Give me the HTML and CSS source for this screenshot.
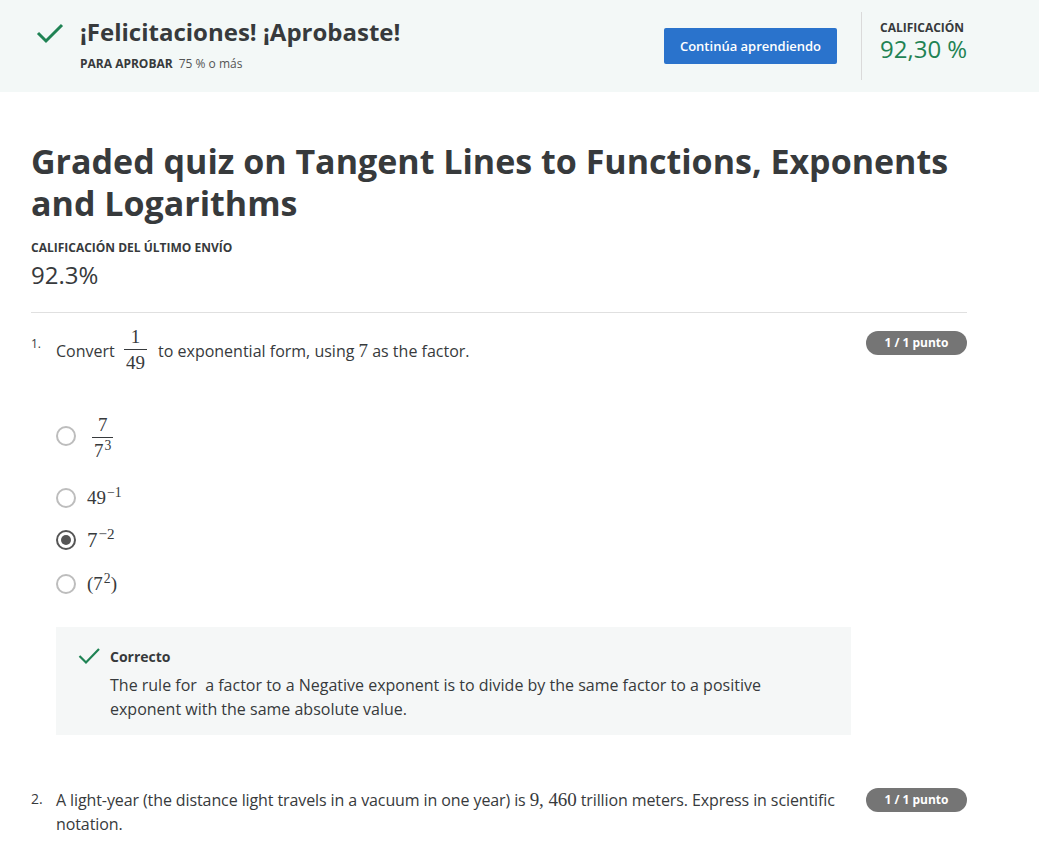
FILE: index.html
```html
<!DOCTYPE html>
<html lang="es">
<head>
<meta charset="utf-8">
<title>Graded quiz</title>
<link rel="stylesheet" href="styles.css">
</head>
<body>
<header class="banner">
  <div class="banner-left">
    <svg class="banner-check" width="28" height="22" viewBox="0 0 28 22"><path d="M2 11 L10 19 L26 3" fill="none" stroke="#1f8354" stroke-width="3"/></svg>
    <div class="banner-text">
      <h2 class="banner-title">¡Felicitaciones! ¡Aprobaste!</h2>
      <div class="banner-sub"><span class="sub-label">PARA APROBAR</span><span class="sub-val">75 % o más</span></div>
    </div>
  </div>
  <button class="btn">Continúa aprendiendo</button>
  <div class="grade">
    <div class="grade-label">CALIFICACIÓN</div>
    <div class="grade-val">92,30 %</div>
  </div>
</header>

<main class="content">
  <h1 class="quiz-title">Graded quiz on Tangent Lines to Functions, Exponents and Logarithms</h1>
  <div class="last-label">CALIFICACIÓN DEL ÚLTIMO ENVÍO</div>
  <div class="last-val">92.3%</div>
  <hr class="rule">

  <section class="q q1">
    <div class="qnum">1.</div>
    <div class="qbody">
      <div class="qtext">Convert <span class="frac big"><span class="num">1</span><span class="den">49</span></span> to exponential form, using <span class="m">7</span> as the factor.</div>
      <div class="options">
        <div class="opt opt-frac"><span class="radio"></span><span class="frac big"><span class="num">7</span><span class="den">7<sup>3</sup></span></span></div>
        <div class="opt"><span class="radio"></span><span class="m">49<sup>−1</sup></span></div>
        <div class="opt"><span class="radio checked"></span><span class="m big">7<sup>−2</sup></span></div>
        <div class="opt"><span class="radio"></span><span class="m">(7<sup>2</sup>)</span></div>
      </div>
      <div class="feedback">
        <svg class="fb-check" width="22" height="18" viewBox="0 0 22 18"><path d="M1.5 9 L8 15.5 L21 2" fill="none" stroke="#1f8354" stroke-width="2.2"/></svg>
        <div class="fb-body">
          <div class="fb-title">Correcto</div>
          <p class="fb-text">The rule for&nbsp; a factor to a Negative exponent is to divide by the same factor to a positive exponent with the same absolute value.</p>
        </div>
      </div>
    </div>
    <div class="badge">1 / 1 punto</div>
  </section>

  <section class="q q2">
    <div class="qnum">2.</div>
    <div class="qbody">
      <div class="qtext">A light-year (the distance light travels in a vacuum in one year) is <span class="m">9, 460</span> trillion meters. Express in scientific notation.</div>
    </div>
    <div class="badge">1 / 1 punto</div>
  </section>
</main>
</body>
</html>
```

FILE: styles.css
```css
* { box-sizing: border-box; }
html, body { margin: 0; padding: 0; }
body {
  font-family: "Open Sans", "Noto Sans", sans-serif;
  color: #373a3c;
  background: #fff;
}

.banner {
  height: 92px;
  background: #f3f8f7;
  display: flex;
  align-items: center;
  padding: 0 0 0 36px;
}
.banner-left {
  display: flex;
  align-items: flex-start;
  flex: 0 0 628px;
  margin-top: -4px;
}
.banner-check { margin-top: 6px; margin-right: 16px; }
.banner-title {
  margin: 0;
  font-size: 24px;
  font-weight: 700;
  line-height: 32px;
  color: #373a3c;
}
.banner-sub { margin-top: 8px; font-size: 12px; line-height: 16px; }
.sub-label { font-weight: 700; margin-right: 6px; }
.sub-val { color: #555; }

.btn {
  width: 173px;
  height: 36px;
  background: #2a73cc;
  color: #fff;
  border: 0;
  border-radius: 2px;
  font-family: "Open Sans", sans-serif;
  font-size: 13px;
  font-weight: 600;
  padding: 0;
}
.grade {
  margin-left: 24px;
  height: 68px;
  border-left: 1px solid #dadada;
  padding: 8px 0 0 18px;
  align-self: center;
}
.grade-label { font-size: 12px; font-weight: 700; line-height: 16px; }
.grade-val { font-size: 24px; color: #1f8354; line-height: 26px; }

.content { width: 936px; margin-left: 31px; padding-top: 48px; }
.quiz-title {
  margin: 0;
  font-size: 34px;
  line-height: 42px;
  font-weight: 700;
  color: #373a3c;
  padding-right: 10px;
}
.last-label { margin-top: 16px; font-size: 12px; font-weight: 700; line-height: 16px; }
.last-val { font-size: 24px; line-height: 30px; margin-top: 4px; }
.rule { border: 0; border-top: 1px solid #e0e0e0; margin: 22px 0 0; }

.q { display: flex; align-items: flex-start; }
.q1 { margin-top: 20px; }
.qnum { width: 25px; flex: none; font-size: 12px; line-height: 22px; }
.qbody { flex: 0 0 795px; min-width: 0; }
.qtext { font-size: 16px; line-height: 24px; }
.badge {
  flex: none;
  width: 101px;
  height: 24px;
  margin-left: 15px;
  background: #757575;
  color: #fff;
  border-radius: 12px;
  font-size: 12px;
  font-weight: 700;
  line-height: 24px;
  text-align: center;
}
.q1 .badge { margin-top: -2px; }

.m { font-family: "Liberation Serif", "DejaVu Serif", serif; font-size: 19px; line-height: 1; }
.m.big { font-size: 21px; }
.m sup, .frac sup { font-size: 0.72em; vertical-align: 0.5em; line-height: 0; margin-left: 1px; }

.frac {
  display: inline-flex;
  flex-direction: column;
  align-items: center;
  vertical-align: middle;
  font-family: "Liberation Serif", "DejaVu Serif", serif;
  font-size: 19px;
  line-height: 20px;
  margin: 0 7px 0 5px;
}
.frac .num { padding: 0 1px 2px; }
.frac .den { border-top: 1px solid #373a3c; padding: 3px 2px 0; width: 100%; text-align: center; }
.q1 .qtext .frac { margin-top: -6px; }

.options { margin-top: 53px; }
.opt { display: flex; align-items: center; gap: 11px; }
.opt + .opt { margin-top: 16px; }
.opt-frac + .opt { margin-top: 24px; }
.opt-frac { align-items: flex-start; }
.opt-frac .frac { margin: -11px 0 0 5px; }
.opt .m { line-height: 26px; }
.opt:last-child { margin-top: 18px; }
.radio {
  width: 20px; height: 20px; flex: none;
  border: 2px solid #bdbdbd;
  border-radius: 50%;
  position: relative;
  background: #fff;
}
.radio.checked { border-color: #555; }
.radio.checked::after {
  content: "";
  position: absolute;
  left: 3px; top: 3px;
  width: 10px; height: 10px;
  border-radius: 50%;
  background: #555;
}

.feedback {
  margin-top: 30px;
  width: 795px;
  background: #f5f7f7;
  display: flex;
  padding: 20px 20px 14px 22px;
}
.fb-check { margin-right: 10px; flex: none; }
.fb-title { font-size: 14px; font-weight: 700; line-height: 20px; }
.fb-text { margin: 6px 0 0; font-size: 16px; line-height: 24px; }

.q2 { margin-top: 53px; }
.q2 .qnum { font-size: 14px; }
.q2 .qtext { letter-spacing: -0.1px; padding-right: 3px; }
```
